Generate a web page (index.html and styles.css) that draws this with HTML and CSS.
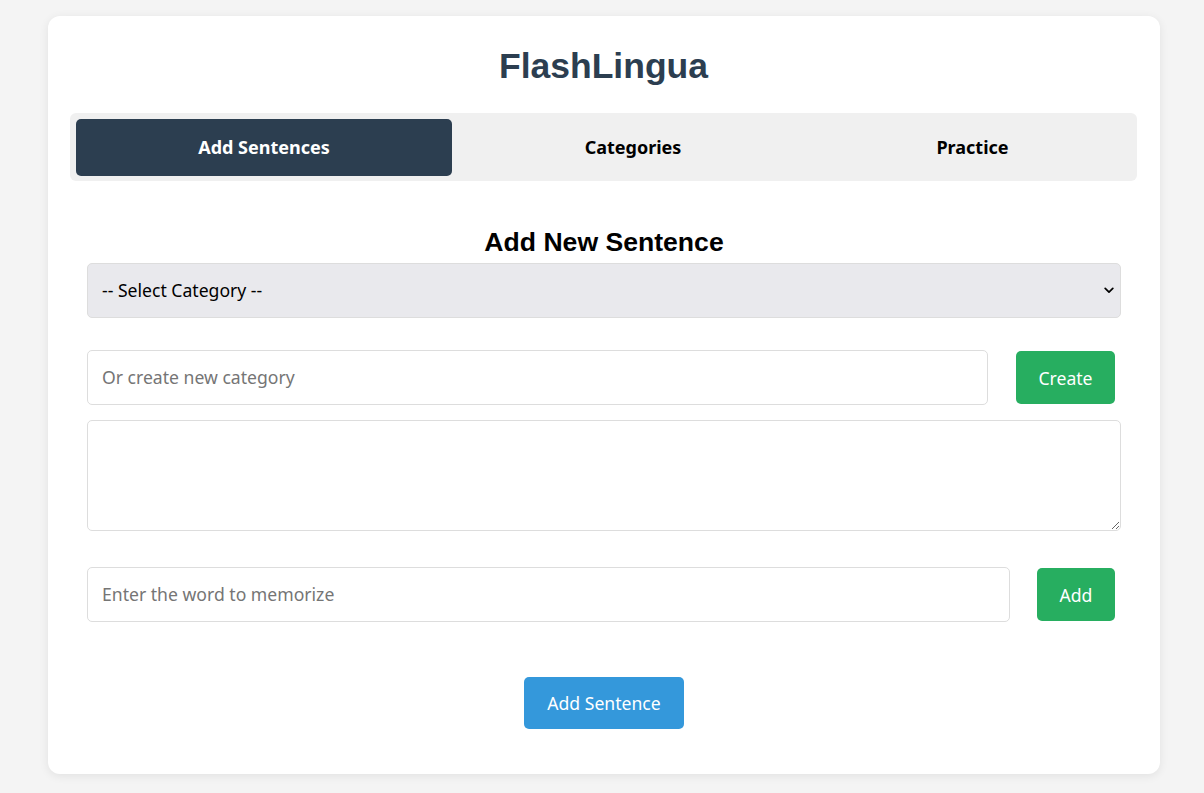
FILE: index.html
```html
<!DOCTYPE html>
<html lang="en">
<head>
<meta charset="utf-8">
<title>FlashLingua</title>
<link rel="stylesheet" href="styles.css">
</head>
<body>
<div class="card">
  <h1 class="title">FlashLingua</h1>
  <nav class="tabs">
    <button class="tab active">Add Sentences</button>
    <button class="tab">Categories</button>
    <button class="tab">Practice</button>
  </nav>
  <section class="panel">
    <h2 class="panel-title">Add New Sentence</h2>
    <div class="select-wrap">
      <select class="field select">
        <option>-- Select Category --</option>
      </select>
      <svg class="chevron" width="10" height="7" viewBox="0 0 10 7" aria-hidden="true">
        <path d="M1.2 1.4 L5 5.2 L8.8 1.4" fill="none" stroke="#000" stroke-width="1.7" stroke-linecap="round" stroke-linejoin="round"/>
      </svg>
    </div>
    <div class="row row-create">
      <input class="field grow" type="text" placeholder="Or create new category">
      <button class="btn btn-green btn-create">Create</button>
    </div>
    <textarea class="field textarea"></textarea>
    <div class="row row-word">
      <input class="field grow" type="text" placeholder="Enter the word to memorize">
      <button class="btn btn-green btn-add">Add</button>
    </div>
    <div class="actions">
      <button class="btn btn-blue">Add Sentence</button>
    </div>
  </section>
</div>
</body>
</html>
```

FILE: styles.css
```css
* { box-sizing: border-box; }

body {
  margin: 0;
  background: #f4f4f4;
  font-family: "Noto Sans", "Open Sans", sans-serif;
  padding: 16px 44px 19px 48px;
}

.card {
  background: #fff;
  border-radius: 12px;
  box-shadow: 0 2px 10px rgba(0, 0, 0, 0.08);
  padding: 28px 23px 45px 22px;
}

.title {
  margin: 0 0 24px;
  text-align: center;
  font-family: "Liberation Sans", Arial, sans-serif;
  font-size: 35.5px;
  line-height: 45px;
  font-weight: bold;
  color: #2c3e50;
}

.tabs {
  display: grid;
  grid-template-columns: 376fr 362fr 317fr;
  background: #f0f0f0;
  border-radius: 6px;
  padding: 6px 6px 5px;
}

.tab {
  border: none;
  background: transparent;
  font-family: "Noto Sans", "Open Sans", sans-serif;
  font-size: 18px;
  font-weight: bold;
  color: #000;
  height: 57px;
  padding: 0 0 2px;
  border-radius: 5px;
  cursor: pointer;
}

.tab.active {
  background: #2c3e50;
  color: #fff;
}

.panel {
  padding: 0 16px 0 17px;
}

.panel-title {
  margin: 46px 0 6px;
  text-align: center;
  font-family: "Liberation Sans", Arial, sans-serif;
  font-size: 26.6px;
  line-height: 30px;
  font-weight: bold;
  color: #000;
}

.field {
  display: block;
  width: 100%;
  border: 1px solid #ddd;
  border-radius: 5px;
  font-family: "Noto Sans", "Open Sans", sans-serif;
  font-size: 17.6px;
  color: #000;
  padding: 0 14px 2px;
  background: #fff;
}

.field::placeholder {
  color: #757575;
}

.select-wrap {
  position: relative;
}

.select {
  height: 55px;
  appearance: none;
  -webkit-appearance: none;
  background: #e9e9ed;
  padding: 0 30px 2px 14px;
}

.chevron {
  position: absolute;
  right: 7px;
  top: 24px;
  pointer-events: none;
}

.row {
  display: flex;
  align-items: center;
}

.row .field {
  height: 55px;
}

.grow {
  flex: 1;
  min-width: 0;
}

.row-create {
  margin-top: 32px;
}

.textarea {
  margin-top: 15px;
  height: 111px;
  resize: vertical;
  padding: 10px 14px;
}

.row-word {
  margin-top: 36px;
}

.btn {
  border: none;
  border-radius: 5px;
  color: #fff;
  font-family: "Noto Sans", "Open Sans", sans-serif;
  font-size: 17.6px;
  cursor: pointer;
  height: 53px;
}

.btn-green {
  background: #27ae60;
}

.btn-create {
  width: 99px;
  margin: 0 6px 0 28px;
}

.btn-add {
  width: 78px;
  margin: 0 6px 0 27px;
}

.actions {
  display: flex;
  justify-content: center;
  margin-top: 55px;
}

.btn-blue {
  background: #3498db;
  width: 160px;
  height: 52px;
}
```
